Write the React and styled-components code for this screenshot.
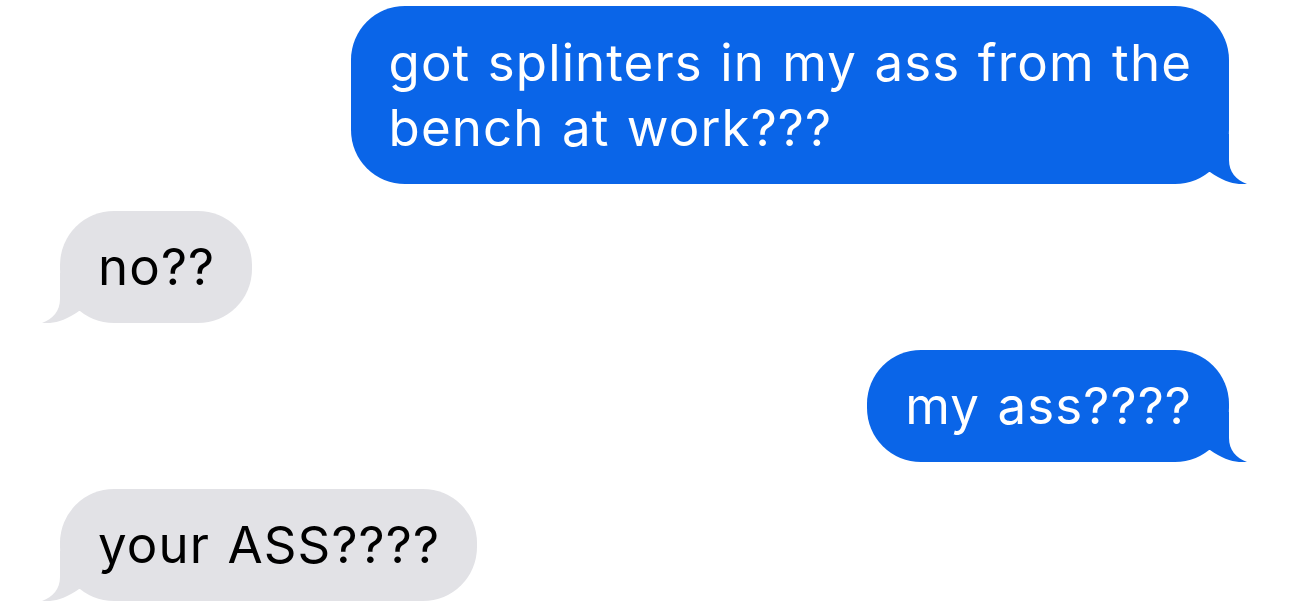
import styled, { createGlobalStyle } from 'styled-components'

const GlobalStyle = createGlobalStyle`
html, body {
   margin: 0;
   padding: 0;
   background: #ffffff;
}
`

const Thread = styled.div`
display: flex;
flex-direction: column;
gap: 26.5px;
padding: 6px 61px 0 60px;
font-family: Inter, "Liberation Sans", sans-serif;
`

const Row = styled.div`
display: flex;
justify-content: ${props => props.$me ? 'flex-end' : 'flex-start'};
`

const Bubble = styled.div`
position: relative;
padding: 23.5px 37px 23.5px 38px;
border-radius: 54px;
background: ${props => props.$me ? '#0a65e8' : '#e2e2e6'};
color: ${props => props.$me ? '#ffffff' : '#000000'};
font-size: 51px;
letter-spacing: 1.1px;
word-spacing: 2px;
line-height: 65.5px;
white-space: pre-line;
`

const Tail = styled.svg`
position: absolute;
bottom: 0;
width: 58px;
height: 50px;
${props => props.$me
   ? 'right: -18px;'
   : 'left: -18px; transform: scaleX(-1);'}
`

const Message = ({ me, children }) => (
   <Row $me={me}>
      <Bubble $me={me}>
         {children}
         <Tail $me={me} viewBox="0 0 58 50">
            <path
               d="M40 0 L40 26 C40 38 47 46 58 50 C50 51 36 49 21 38 L0 38 L0 0 Z"
               fill={me ? '#0a65e8' : '#e2e2e6'}
            />
         </Tail>
      </Bubble>
   </Row>
)

export default function App() {
   return (
      <>
         <GlobalStyle />
         <Thread>
            <Message me>{'got splinters in my ass from the\nbench at work???'}</Message>
            <Message>no??</Message>
            <Message me>my ass????</Message>
            <Message>your ASS????</Message>
         </Thread>
      </>
   )
}
